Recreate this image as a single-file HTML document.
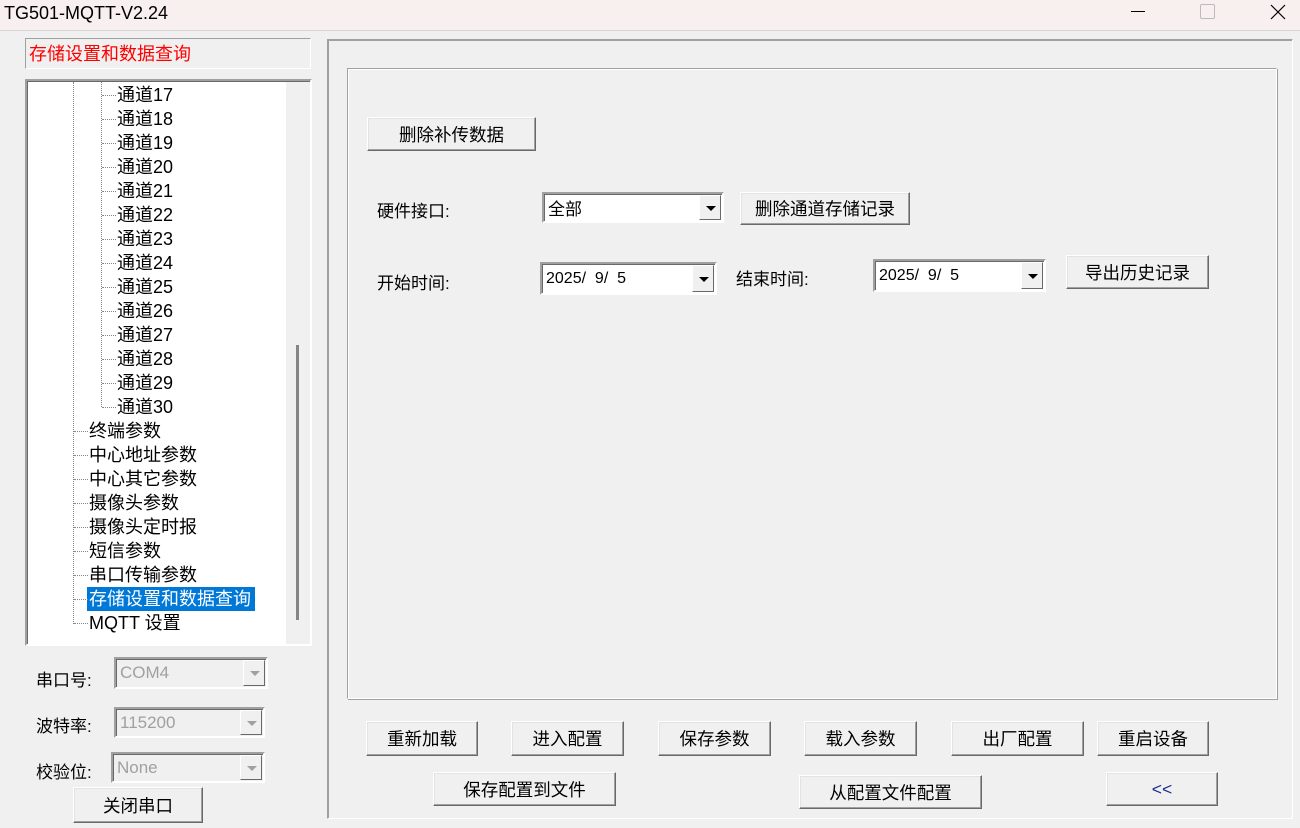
<!DOCTYPE html>
<html><head><meta charset="utf-8"><style>
*{margin:0;padding:0;box-sizing:border-box}
body{width:1300px;height:828px;background:#f0f0f0;position:relative;overflow:hidden;font-family:"Liberation Sans","Noto Sans CJK SC",sans-serif;color:#000}
.a{position:absolute}
.tb{left:0;top:0;width:1300px;height:31px;background:#f7f0ef;border-bottom:1px solid #d8d4d3}
.btn{position:absolute;background:#f0f0f0;border:1px solid;border-color:#fff #696969 #696969 #fff;box-shadow:inset -1px -1px 0 #a0a0a0,inset 1px 1px 0 #e3e3e3;font-size:17.5px;display:flex;align-items:center;justify-content:center}
.lbl{position:absolute;font-size:17px}
.cb{position:absolute;background:#fff;border:2px solid;border-color:#a0a0a0 #fff #fff #a0a0a0;box-shadow:inset 1px 1px 0 #696969;font-size:17px;padding-left:4px;display:flex;align-items:center}
.cb .ar{position:absolute;right:1px;top:1px;bottom:1px;width:22px;background:#f0f0f0;border:1px solid;border-color:#fff #696969 #696969 #fff}
.cb .ar:after{content:"";position:absolute;left:6px;top:50%;margin-top:-2px;border-left:5px solid transparent;border-right:5px solid transparent;border-top:5px solid #000}
.dis{background:#f0f0f0;color:#a0a0a0}
.dis .ar:after{border-top-color:#a0a0a0}
.ti{position:absolute;font-size:18px;line-height:24px;white-space:nowrap}
.h{position:absolute;border-top:1px dotted #888;width:12px}
</style></head><body>
<div class="a tb"></div>
<div class="a" style="left:4px;top:3px;font-size:18px">TG501-MQTT-V2.24</div>
<div class="a" style="left:1131px;top:11px;width:14px;border-top:1px solid #000"></div>
<div class="a" style="left:1200px;top:4px;width:15px;height:15px;border:1px solid #bbb;border-radius:2px"></div>
<svg class="a" style="left:1270px;top:4px" width="16" height="16"><path d="M1 1L15 15M15 1L1 15" stroke="#000" stroke-width="1.2"/></svg>

<div class="a" style="left:25px;top:38px;width:286px;height:31px;border:1px solid;border-color:#a0a0a0 #fff #fff #a0a0a0"></div>
<div class="a" style="left:29px;top:40px;font-size:18px;color:#f00">存储设置和数据查询</div>

<div class="a" style="left:25px;top:79px;width:287px;height:567px;border:2px solid;border-color:#a0a0a0 #fff #fff #a0a0a0;box-shadow:inset 1px 1px 0 #696969;background:#fff"></div>
<div class="a" style="left:286px;top:82px;width:24px;height:562px;background:#f0f0f0"></div>
<div class="a" style="left:296px;top:345px;width:3px;height:275px;background:#858585"></div>
<div class="a" style="left:73px;top:82px;height:542px;border-left:1px dotted #888"></div>
<div class="a" style="left:101px;top:82px;height:325px;border-left:1px dotted #888"></div>
<div class="a" style="left:87px;top:587px;width:168px;height:24px;background:#0078d7"></div>
<div id="tree"></div>

<div class="lbl" style="left:36px;top:666px">串口号:</div>
<div class="cb dis" style="left:114px;top:657px;width:154px;height:32px">COM4<div class="ar"></div></div>
<div class="lbl" style="left:36px;top:712px">波特率:</div>
<div class="cb dis" style="left:114px;top:707px;width:151px;height:31px">115200<div class="ar"></div></div>
<div class="lbl" style="left:36px;top:758px">校验位:</div>
<div class="cb dis" style="left:111px;top:752px;width:154px;height:31px">None<div class="ar"></div></div>
<div class="btn" style="left:73px;top:787px;width:130px;height:36px">关闭串口</div>

<div class="a" style="left:327px;top:39px;width:966px;height:780px;border:1px solid;border-color:#a0a0a0 #fff #fff #a0a0a0;box-shadow:1px 1px 0 #a0a0a0 inset"></div>
<div class="a" style="left:347px;top:68px;width:930px;height:631px;border:1px solid;border-color:#a0a0a0 #fff #fff #a0a0a0;box-shadow:inset 1px 1px 0 #fff,1px 1px 0 #a0a0a0"></div>

<div class="btn" style="left:367px;top:117px;width:169px;height:34px">删除补传数据</div>
<div class="lbl" style="left:377px;top:197px">硬件接口:</div>
<div class="cb" style="left:542px;top:192px;width:182px;height:31px">全部<div class="ar"></div></div>
<div class="btn" style="left:740px;top:192px;width:170px;height:33px">删除通道存储记录</div>
<div class="lbl" style="left:377px;top:269px">开始时间:</div>
<div class="cb" style="left:540px;top:262px;width:177px;height:33px;font-size:16px">2025/&nbsp; 9/&nbsp; 5<div class="ar"></div></div>
<div class="lbl" style="left:736px;top:265px">结束时间:</div>
<div class="cb" style="left:873px;top:259px;width:173px;height:33px;font-size:16px">2025/&nbsp; 9/&nbsp; 5<div class="ar"></div></div>
<div class="btn" style="left:1066px;top:255px;width:143px;height:34px">导出历史记录</div>

<div class="btn" style="left:366px;top:721px;width:112px;height:35px">重新加载</div>
<div class="btn" style="left:511px;top:721px;width:113px;height:35px">进入配置</div>
<div class="btn" style="left:658px;top:721px;width:113px;height:35px">保存参数</div>
<div class="btn" style="left:804px;top:721px;width:113px;height:35px">载入参数</div>
<div class="btn" style="left:951px;top:721px;width:133px;height:35px">出厂配置</div>
<div class="btn" style="left:1097px;top:721px;width:112px;height:35px">重启设备</div>
<div class="btn" style="left:433px;top:772px;width:183px;height:34px">保存配置到文件</div>
<div class="btn" style="left:799px;top:775px;width:183px;height:34px">从配置文件配置</div>
<div class="btn" style="left:1106px;top:772px;width:112px;height:34px;color:#1a2a8a">&lt;&lt;</div>
<script>
var t=document.getElementById('tree'),h='';
for(var i=17;i<=30;i++){var y=83+(i-17)*24;h+='<div class="h" style="left:102px;top:'+(y+12)+'px;width:14px"></div><div class="ti" style="left:117px;top:'+y+'px">通道'+i+'</div>';}
var L=['终端参数','中心地址参数','中心其它参数','摄像头参数','摄像头定时报','短信参数','串口传输参数','存储设置和数据查询','MQTT 设置'];
for(var j=0;j<L.length;j++){var y=419+j*24;h+='<div class="h" style="left:74px;top:'+(y+12)+'px;width:14px"></div><div class="ti" style="left:89px;top:'+y+'px;'+(j==7?'color:#fff;z-index:2':'')+'">'+L[j]+'</div>';}
t.innerHTML=h;
</script>
</body></html>
